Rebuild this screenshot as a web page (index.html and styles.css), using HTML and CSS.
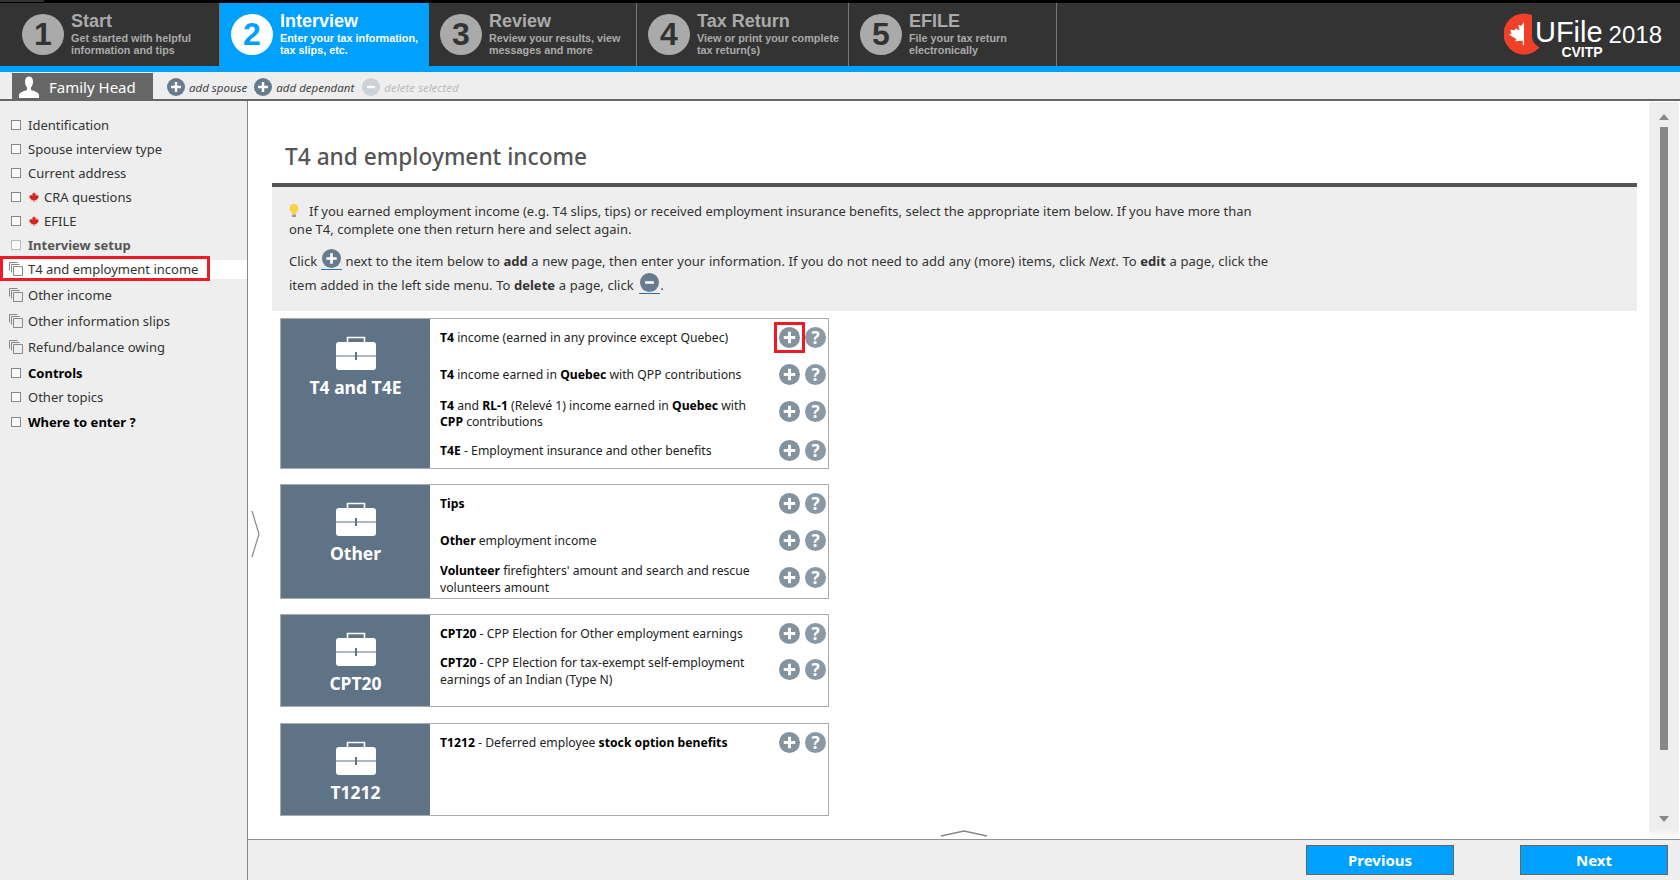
FILE: index.html
```html
<!DOCTYPE html>
<html lang="en">
<head>
    <meta charset="UTF-8">
    <title>UFile 2018 - T4 and employment income</title>
    <link rel="stylesheet" href="styles.css">
</head>
<body>
    <svg class="sprites" width="0" height="0">
        <symbol id="i-plus" viewBox="0 0 22 22">
            <circle cx="11" cy="11" r="11" fill="currentColor"/>
            <path d="M11 5v12M5 11h12" stroke="#fff" stroke-width="3"/>
        </symbol>
        <symbol id="i-minus" viewBox="0 0 22 22">
            <circle cx="11" cy="11" r="11" fill="currentColor"/>
            <path d="M6 11h10" stroke="#fff" stroke-width="3"/>
        </symbol>
        <symbol id="i-case" viewBox="0 0 40 34">
            <path d="M11.5 7V1.5h17V7" fill="none" stroke="#fff" stroke-width="1.6"/>
            <rect y="6" width="40" height="28" rx="3" fill="#fff"/>
            <path d="M0 20h40" stroke="#5f7386" stroke-width="1.2"/>
            <path d="M20 16v8" stroke="#5f7386" stroke-width="2"/>
        </symbol>
        <symbol id="i-leaf" viewBox="0 0 24 24">
            <path fill="#d8251c" d="M12 0l2 4 2.500-1-1 6 3-2.500 1 2 3.500-.5-1 4 2 1-6 5 1 2-6-.5V24h-2v-4.500l-6 .5 1-2-6-5 2-1-1-4 3.500.5 1-2 3 2.500-1-6 2.500 1z"/>
        </symbol>
        <symbol id="i-pages" viewBox="0 0 14 14">
            <path d="M.5 8.500V.5h8M2.500 10.500v-8h8M4.500 4.500h9v9h-9z" fill="none" stroke="#888"/>
        </symbol>
    </svg>

    <div class="topstrip"><span class="topstrip-tab"></span></div>

    <header class="header">
        <nav class="steps">
            <a class="step step-first"><span class="step-num">1</span><span class="step-text"><b>Start</b><small>Get started with helpful<br>information and tips</small></span></a>
            <a class="step step-active"><span class="step-num">2</span><span class="step-text"><b>Interview</b><small>Enter your tax information,<br>tax slips, etc.</small></span></a>
            <a class="step"><span class="step-num">3</span><span class="step-text"><b>Review</b><small>Review your results, view<br>messages and more</small></span></a>
            <a class="step"><span class="step-num">4</span><span class="step-text"><b>Tax Return</b><small>View or print your complete<br>tax return(s)</small></span></a>
            <a class="step"><span class="step-num">5</span><span class="step-text"><b>EFILE</b><small>File your tax return<br>electronically</small></span></a>
        </nav>
        <div class="logo">
            <svg class="logo-mark" width="45" height="50" viewBox="0 0 45 50">
                <circle cx="20" cy="24" r="20.500" fill="#f0402a"/>
                <path d="M28 0H45V38H40A12 12 0 0 1 28 26Z" fill="#333"/>
                <path fill="#fff" d="M20 12L17.500 15.800 14.400 14.900 15.600 20.600 11.900 18.200 10.600 20.200 6.300 19.700 7.500 23.500 5 24.500 12.500 29.300 11.300 31.200 18.800 30.700V35H20Z"/>
            </svg>
            <div class="logo-name"><span class="logo-ufile">UFile</span><span class="logo-cvitp">CVITP</span></div>
            <span class="logo-year">2018</span>
        </div>
    </header>

    <div class="subbar">
        <div class="family-tab">
            <svg width="22" height="22" viewBox="0 0 22 22"><path fill="#fff" d="M7 5.500C7 2 8.800.5 11 .5S15 2 15 5.500c0 2.800-1 5-2 6v2.500c3 1.200 7 2 8 4.500V22H1v-3.500c1-2.500 5-3.300 8-4.500v-2.500c-1-1-2-3.200-2-6z"/></svg>
            <span>Family Head</span>
        </div>
        <a class="subbar-link"><svg class="icon-dark" width="18" height="18"><use href="#i-plus"/></svg>add spouse</a>
        <a class="subbar-link"><svg class="icon-dark" width="18" height="18"><use href="#i-plus"/></svg>add dependant</a>
        <a class="subbar-link subbar-link-off"><svg class="icon-off" width="18" height="18"><use href="#i-minus"/></svg>delete selected</a>
    </div>

    <div class="workspace">
        <aside class="sidebar">
            <ul class="menu">
                <li><span class="check"></span>Identification</li>
                <li><span class="check"></span>Spouse interview type</li>
                <li><span class="check"></span>Current address</li>
                <li><span class="check"></span><svg class="leaf" width="10" height="10"><use href="#i-leaf"/></svg>CRA questions</li>
                <li><span class="check"></span><svg class="leaf" width="10" height="10"><use href="#i-leaf"/></svg>EFILE</li>
                <li class="muted"><span class="check"></span>Interview setup</li>
                <li class="current"><svg class="pages" width="14" height="14"><use href="#i-pages"/></svg>T4 and employment income<span class="outline"></span></li>
                <li class="multi"><svg class="pages" width="14" height="14"><use href="#i-pages"/></svg>Other income</li>
                <li class="multi"><svg class="pages" width="14" height="14"><use href="#i-pages"/></svg>Other information slips</li>
                <li class="multi"><svg class="pages" width="14" height="14"><use href="#i-pages"/></svg>Refund/balance owing</li>
                <li class="strong controls"><span class="check"></span>Controls</li>
                <li><span class="check"></span>Other topics</li>
                <li class="strong where"><span class="check"></span>Where to enter ?</li>
            </ul>
        </aside>

        <main class="main">
            <div class="main-scroll">
                <div class="content">
                    <h1>T4 and employment income</h1>
                    <div class="intro">
                        <p><svg class="bulb" width="10" height="13" viewBox="0 0 10 13"><path fill="#f5d547" d="M5 0a4.500 4.500 0 0 1 2.500 8.200V10h-5V8.200A4.500 4.500 0 0 1 5 0z"/><path fill="#999" d="M3 10.500h4V13H3z"/></svg>If you earned employment income (e.g. T4 slips, tips) or received employment insurance benefits, select the appropriate item below. If you have more than<br>one T4, complete one then return here and select again.</p>
                        <p class="intro-how">Click <a class="inline-icon"><svg class="icon-dark" width="19" height="19"><use href="#i-plus"/></svg></a> next to the item below to <b>add</b> a new page, then enter your information. If you do not need to add any (more) items, click <i>Next</i>. To <b>edit</b> a page, click the<br>item added in the left side menu. To <b>delete</b> a page, click <a class="inline-icon inline-icon-minus"><svg class="icon-dark" width="19" height="19"><use href="#i-minus"/></svg></a>.</p>
                    </div>

                    <section class="card">
                        <div class="card-side"><svg width="40" height="34"><use href="#i-case"/></svg><span>T4 and T4E</span></div>
                        <div class="card-rows">
                            <div class="row"><p><b>T4</b> income (earned in any province except Quebec)</p><div class="actions"><span class="add"><svg width="21" height="21"><use href="#i-plus"/></svg><span class="outline-add"></span></span><span class="help">?</span></div></div>
                            <div class="row"><p><b>T4</b> income earned in <b>Quebec</b> with QPP contributions</p><div class="actions"><span class="add"><svg width="21" height="21"><use href="#i-plus"/></svg></span><span class="help">?</span></div></div>
                            <div class="row row-two row-tall"><p><b>T4</b> and <b>RL-1</b> (Relevé 1) income earned in <b>Quebec</b> with<br><b>CPP</b> contributions</p><div class="actions"><span class="add"><svg width="21" height="21"><use href="#i-plus"/></svg></span><span class="help">?</span></div></div>
                            <div class="row row-short"><p><b>T4E</b> - Employment insurance and other benefits</p><div class="actions"><span class="add"><svg width="21" height="21"><use href="#i-plus"/></svg></span><span class="help">?</span></div></div>
                        </div>
                    </section>

                    <section class="card card-snug">
                        <div class="card-side"><svg width="40" height="34"><use href="#i-case"/></svg><span>Other</span></div>
                        <div class="card-rows">
                            <div class="row"><p><b>Tips</b></p><div class="actions"><span class="add"><svg width="21" height="21"><use href="#i-plus"/></svg></span><span class="help">?</span></div></div>
                            <div class="row"><p><b>Other</b> employment income</p><div class="actions"><span class="add"><svg width="21" height="21"><use href="#i-plus"/></svg></span><span class="help">?</span></div></div>
                            <div class="row row-two row-wide"><p><b>Volunteer</b> firefighters' amount and search and rescue<br>volunteers amount</p><div class="actions"><span class="add"><svg width="21" height="21"><use href="#i-plus"/></svg></span><span class="help">?</span></div></div>
                        </div>
                    </section>

                    <section class="card card-snug">
                        <div class="card-side"><svg width="40" height="34"><use href="#i-case"/></svg><span>CPT20</span></div>
                        <div class="card-rows">
                            <div class="row"><p><b>CPT20</b> - CPP Election for Other employment earnings</p><div class="actions"><span class="add"><svg width="21" height="21"><use href="#i-plus"/></svg></span><span class="help">?</span></div></div>
                            <div class="row row-two"><p><b>CPT20</b> - CPP Election for tax-exempt self-employment<br>earnings of an Indian (Type N)</p><div class="actions"><span class="add"><svg width="21" height="21"><use href="#i-plus"/></svg></span><span class="help">?</span></div></div>
                        </div>
                    </section>

                    <section class="card">
                        <div class="card-side"><svg width="40" height="34"><use href="#i-case"/></svg><span>T1212</span></div>
                        <div class="card-rows">
                            <div class="row"><p><b>T1212</b> - Deferred employee <b>stock option benefits</b></p><div class="actions"><span class="add"><svg width="21" height="21"><use href="#i-plus"/></svg></span><span class="help">?</span></div></div>
                        </div>
                    </section>
                </div>

                <div class="scrollbar">
                    <span class="arrow-up"></span>
                    <span class="thumb"></span>
                    <span class="arrow-down"></span>
                </div>
            </div>

            <footer class="footer">
                <button type="button">Previous</button>
                <button type="button">Next</button>
            </footer>

            <!-- collapse handles sit on top of the panels -->
            <svg class="handle-left" width="9" height="48" viewBox="0 0 9 48"><path d="M1 1l7 23-7 23" fill="none" stroke="#888" stroke-width="1.200"/></svg>
            <svg class="handle-bottom" width="48" height="9" viewBox="0 0 48 9"><path d="M1 7l23-5 23 5" fill="none" stroke="#888" stroke-width="1.500"/></svg>
        </main>
    </div>
</body>
</html>
```

FILE: styles.css
```css
* {
    box-sizing: border-box;
}
html, body {
    height: 100%;
}
body {
    margin: 0;
    display: flex;
    flex-direction: column;
    overflow: hidden;
    font-family: "Noto Sans", sans-serif;
    font-size: 13px;
    color: #333;
    background: #fff;
}
p {
    margin: 0;
}
.sprites {
    position: absolute;
}

.topstrip {
    height: 3px;
    background: #000;
}
.topstrip-tab {
    display: block;
    width: 44px;
    height: 2px;
    background: #333;
}

/* step header */
.header {
    display: flex;
    height: 69px;
    background: #333;
    border-bottom: 6px solid #00a0ff;
    font-family: "Liberation Sans", Arial, sans-serif;
}
.steps {
    display: grid;
    grid-template-columns: 220px 209px 208px 212px 208px;
}
.step {
    display: flex;
    align-items: center;
    padding-left: 11px;
    color: #aaa;
    border-right: 1px solid #777;
}
.step-first {
    padding-left: 22px;
}
.step-active {
    background: #00a0ff;
    color: #fff;
    border-right: none;
}
.step-num {
    flex: none;
    width: 42px;
    height: 41px;
    margin-right: 7px;
    border-radius: 50%;
    background: #aaa;
    color: #333;
    font-size: 32px;
    font-weight: bold;
    line-height: 41px;
    text-align: center;
}
.step-active .step-num {
    background: #fff;
    color: #00a0ff;
}
.step-text {
    margin-top: -2px;
}
.step-text b {
    display: block;
    font-size: 18px;
    line-height: 21px;
}
.step-text small {
    display: block;
    font-size: 10.800px;
    font-weight: bold;
    line-height: 12px;
}

.logo {
    display: flex;
    margin-left: auto;
    padding-right: 18px;
    color: #fff;
}
.logo-mark {
    margin-top: 7px;
    margin-right: -14px;
}
.logo-name {
    display: flex;
    flex-direction: column;
    align-items: flex-end;
    padding-top: 16px;
}
.logo-ufile {
    font-size: 29px;
    line-height: 27px;
}
.logo-cvitp {
    font-size: 14px;
    font-weight: bold;
    line-height: 12px;
}
.logo-year {
    margin-left: 6px;
    padding-top: 18px;
    font-size: 24px;
    line-height: 28px;
}

/* family bar */
.subbar {
    display: flex;
    align-items: flex-end;
    height: 29px;
    padding-left: 12px;
    background: #eee;
    border-bottom: 2px solid #666;
}
.family-tab {
    display: flex;
    align-items: center;
    width: 141px;
    height: 26px;
    margin-right: 14px;
    padding-left: 6px;
    padding-top: 1px;
    background: #666;
    color: #fff;
    font-size: 15px;
}
.family-tab svg {
    margin-right: 9px;
}
.subbar-link {
    display: flex;
    align-items: center;
    gap: 4px;
    height: 26px;
    margin-right: 7px;
    padding-top: 2px;
    font-size: 11.500px;
    font-style: italic;
    color: #444;
}
.subbar-link-off {
    margin-left: 1px;
    color: #bbb;
}
.icon-dark {
    color: #677b8d;
}
.icon-off {
    color: #cdd2d6;
}

.workspace {
    display: flex;
    flex: 1;
    min-height: 0;
}

/* left menu */
.sidebar {
    flex: none;
    width: 248px;
    padding-top: 12px;
    background: #eee;
    border-right: 1px solid #888;
}
.menu {
    margin: 0;
    padding: 0;
    list-style: none;
}
.menu li {
    position: relative;
    display: flex;
    align-items: center;
    height: 24px;
    padding-left: 11px;
}
.menu .multi {
    height: 26px;
}
.menu li:nth-child(8) {
    margin-top: 1px;
}
.menu .controls {
    height: 25px;
}
.menu .where {
    margin-top: 1px;
}
.check {
    flex: none;
    width: 10px;
    height: 10px;
    margin-right: 7px;
    border: 1px solid #888;
    background: #fafafa;
}
.leaf {
    margin-right: 5px;
    margin-left: 1px;
}
.pages {
    flex: none;
    margin-left: -2px;
    margin-right: 5px;
}
.muted {
    color: #555;
    font-weight: bold;
}
.muted .check {
    border-color: #bbb;
}
.strong {
    color: #000;
    font-weight: bold;
}
.current {
    background: linear-gradient(#fff, #fff) center / 100% 19px no-repeat;
}
.outline {
    position: absolute;
    left: 0;
    top: -1px;
    width: 210px;
    height: 25px;
    border: 3px solid #ed1c24;
}

/* main panel */
.main {
    position: relative;
    display: flex;
    flex-direction: column;
    flex: 1;
    min-width: 0;
}
.main-scroll {
    display: flex;
    flex: 1;
    min-height: 0;
}
.content {
    flex: 1;
    min-width: 0;
    padding: 0 12px 0 24px;
    overflow: hidden;
}
h1 {
    height: 86px;
    margin: 0;
    padding: 40px 0 0 13px;
    border-bottom: 4px solid #555;
    color: #555;
    font-size: 22.700px;
    font-weight: 500;
    line-height: 32px;
}
.intro {
    height: 124px;
    padding: 15px 0 0 17px;
    background: #eee;
    line-height: 18px;
}
.bulb {
    margin-right: 10px;
    vertical-align: -1px;
}
.intro-how {
    margin-top: 11px;
    line-height: 23px;
    word-spacing: .3px;
}
.inline-icon {
    display: inline-block;
    height: 21px;
    padding: 0 1px;
    border-bottom: 1px solid #2a6fb8;
    vertical-align: -2px;
}
.inline-icon-minus {
    margin-left: 2px;
}

.card {
    display: flex;
    width: 549px;
    margin: 16px 0 0 8px;
    border: 1px solid #aaa;
}
.intro + .card {
    margin-top: 7px;
}
.card-snug {
    margin-top: 15px;
}
.card-side {
    flex: none;
    display: flex;
    flex-direction: column;
    align-items: center;
    width: 149px;
    padding-top: 17px;
    background: #5f7386;
    color: #fff;
    font-size: 17.500px;
    font-weight: bold;
}
.card-side span {
    margin-top: 5px;
    line-height: 24px;
}
.card-rows {
    flex: 1;
    padding-left: 10px;
    min-height: 91px;
}
.row {
    display: flex;
    align-items: center;
    justify-content: space-between;
    height: 37px;
    font-size: 12.200px;
    line-height: 16.500px;
    padding-right: 2px;
    color: #222;
}
.row b {
    color: #000;
}
.row p {
    padding-top: 2px;
}
.row-two .actions {
    margin-top: -2px;
}
.row-tall {
    height: 40px;
}
.row-tall .actions {
    margin-top: -4px;
}
.row-short {
    height: 35px;
}
.row-wide {
    height: 39px;
}
.actions {
    display: flex;
    align-items: center;
    gap: 5px;
}
.add {
    position: relative;
    display: block;
    width: 21px;
    height: 21px;
    color: #83929f;
}
.add svg {
    display: block;
}
.outline-add {
    position: absolute;
    left: -5px;
    top: -5px;
    width: 31px;
    height: 31px;
    border: 3px solid #ed1c24;
}
.help {
    width: 21px;
    height: 21px;
    border-radius: 50%;
    background: #8b98a5;
    color: #fff;
    font-size: 17px;
    font-weight: bold;
    line-height: 21px;
    text-align: center;
}

/* fake scrollbar */
.scrollbar {
    position: relative;
    flex: none;
    display: flex;
    flex-direction: column;
    align-items: center;
    width: 30px;
    margin-top: 1px;
    margin-right: 1px;
    padding-top: 12px;
    background: linear-gradient(#eee calc(100% - 10px), #fff);
}
.arrow-up {
    width: 0;
    height: 0;
    border: 5px solid transparent;
    border-top: none;
    border-bottom: 6px solid #888;
}
.thumb {
    width: 8px;
    height: 623px;
    margin-top: 7px;
    background: #888;
}
.arrow-down {
    width: 0;
    height: 0;
    margin-top: 66px;
    border: 5px solid transparent;
    border-bottom: none;
    border-top: 6px solid #888;
}

.footer {
    flex: none;
    display: flex;
    justify-content: flex-end;
    gap: 66px;
    height: 41px;
    padding: 5px 12px 0 0;
    background: #eee;
    border-top: 1px solid #8a949c;
}
.footer button {
    width: 148px;
    height: 30px;
    padding: 0;
    border: 1px solid #666;
    background: #00a0ff;
    color: #fff;
    font-family: "Noto Sans", sans-serif;
    font-size: 15px;
    font-weight: bold;
}

.handle-left {
    position: absolute;
    left: 3px;
    top: 409px;
}
.handle-bottom {
    position: absolute;
    left: 692px;
    top: 728px;
}
```
